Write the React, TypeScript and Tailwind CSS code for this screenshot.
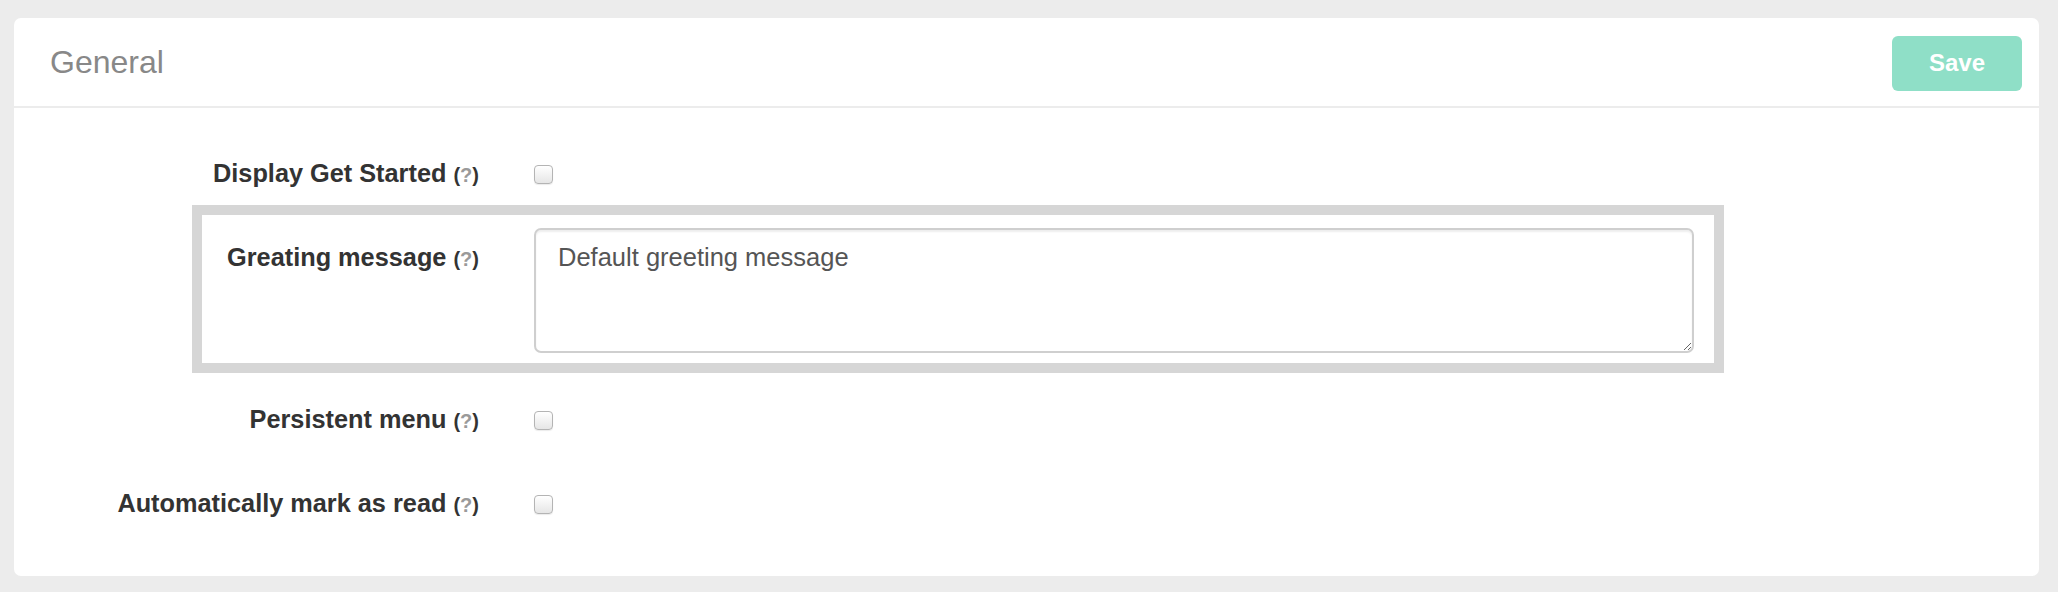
import React from "react"

const font = { fontFamily: '"Liberation Sans", Arial, Helvetica, sans-serif' }

function Help() {
  return (
    <span className="text-[20px] font-bold text-[#333]">
      (<span className="text-[#9a9a9a]">?</span>)
    </span>
  )
}

function Label({ text }: { text: string }) {
  return (
    <div className="w-[277px] shrink-0 flex justify-end">
      <span className="whitespace-nowrap text-[25.3px] leading-[38px] font-bold text-[#333]">
        {text} <Help />
      </span>
    </div>
  )
}

function Checkbox() {
  return (
    <span className="block w-[19px] h-[19px] rounded-[4px] border border-[#b4b4b4] bg-gradient-to-b from-white to-[#e6e6e6] shadow-[0_1px_1px_rgba(0,0,0,0.08)]" />
  )
}

function CheckRow({ text, className }: { text: string; className?: string }) {
  return (
    <div className={"flex items-center h-[38px] px-[10px] " + (className ?? "")}>
      <Label text={text} />
      <div className="ml-[55px] flex items-center">
        <Checkbox />
      </div>
    </div>
  )
}

export default function App() {
  return (
    <div className="min-h-[592px] bg-[#ececec] pt-[18px] px-[14px] pb-[16px]" style={font}>
      <div className="bg-white rounded-[7px] w-[2025px]">
        <div className="h-[90px] flex items-center justify-between pl-[36px] pr-[17px] border-b-2 border-[#ececec]">
          <h2 className="text-[32px] text-[#888] font-normal">General</h2>
          <button className="w-[130px] h-[55px] rounded-[6px] bg-[#8fdfc7] text-white text-[24px] font-bold mt-[2px]">
            Save
          </button>
        </div>

        <div className="pt-[47px] pb-[53px] pl-[178px]">
          <CheckRow text="Display Get Started" />

          <div className="mt-[12px] w-[1532px] border-[10px] border-[#d6d6d6] pt-[13px] pb-[10px] pr-[20px] flex items-start">
            <div className="pt-[10px]">
              <Label text="Greating message" />
            </div>
            <textarea
              defaultValue="Default greeting message"
              className="ml-[55px] flex-1 h-[125px] rounded-[7px] border-2 border-[#cfcfcf] shadow-[inset_0_2px_2px_rgba(0,0,0,0.07)] px-[22px] pt-[9px] text-[25.5px] leading-[36px] text-[#555] outline-none resize-y"
              style={font}
            />
          </div>

          <CheckRow text="Persistent menu" className="mt-[28px]" />
          <CheckRow text="Automatically mark as read" className="mt-[46px]" />
        </div>
      </div>
    </div>
  )
}
